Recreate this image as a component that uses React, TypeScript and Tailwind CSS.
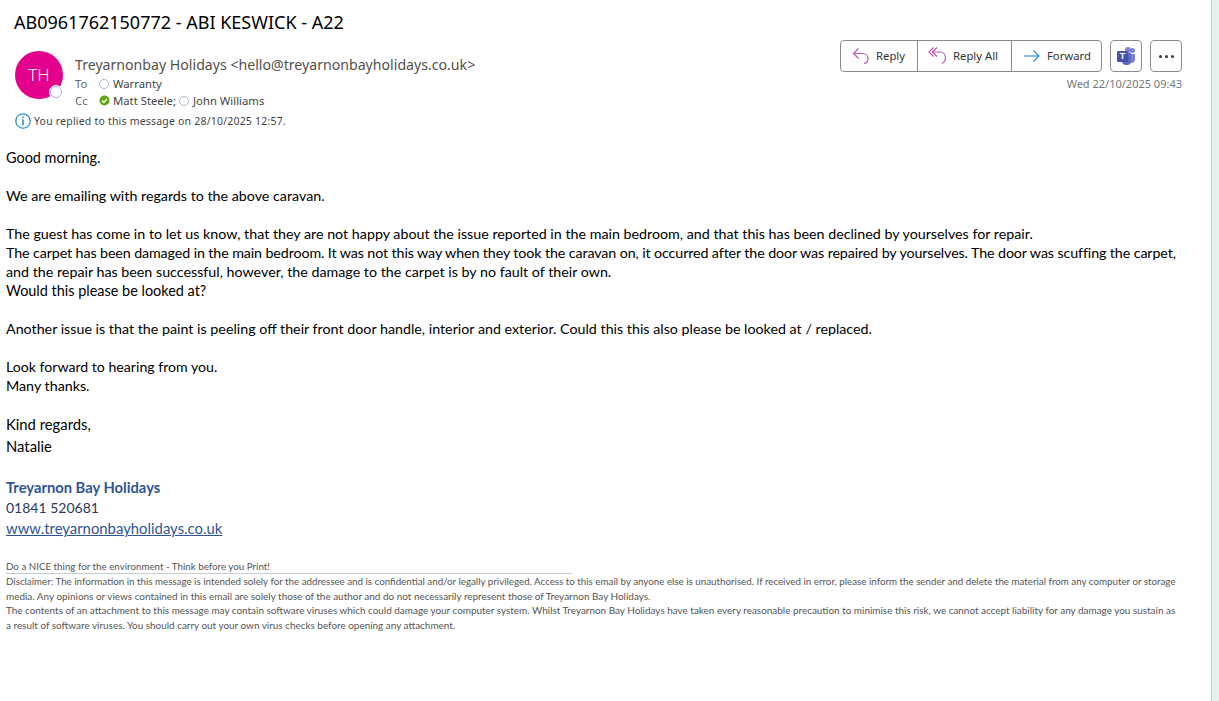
const segoe = "font-['Noto_Sans','Open_Sans',sans-serif]";

function Presence({ on }: { on?: boolean }) {
  if (on) {
    return (
      <svg width="11" height="11" viewBox="0 0 11 11" className="shrink-0">
        <circle cx="5.5" cy="5.5" r="5" fill="#5ea70f" />
        <path d="M3 5.6 L4.9 7.4 L8 3.9" fill="none" stroke="#fff" strokeWidth="1.4" />
      </svg>
    );
  }
  return <span className="block w-[10px] h-[10px] rounded-full border border-[#a9b8c6] bg-white shrink-0" />;
}

function ReplyIcon() {
  return (
    <svg width="20" height="20" viewBox="0 0 20 20" fill="none" stroke="#b556b5" strokeWidth="1.2">
      <path d="M7.5 2.5 L2.5 7.5 L7.5 12.5" />
      <path d="M2.5 7.5 H11.5 C15 7.5 17 10 17 12.5 C17 15 15.5 17 13 17.5" />
    </svg>
  );
}

function ReplyAllIcon() {
  return (
    <svg width="20" height="20" viewBox="0 0 20 20" fill="none" stroke="#b556b5" strokeWidth="1.2">
      <path d="M5.5 1.5 L1 6 L5.5 10.5" />
      <path d="M9 1.5 L4.5 6 L9 10.5" />
      <path d="M4.5 6 H11.5 C15 6 17.5 8.5 17.5 12 C17.5 14.5 16 16.5 14 17.5" />
    </svg>
  );
}

function ForwardIcon() {
  return (
    <svg width="18" height="16" viewBox="0 0 18 16" fill="none" stroke="#2f8fd0" strokeWidth="1.2">
      <path d="M1 8 H16" />
      <path d="M10.5 2.5 L16 8 L10.5 13.5" />
    </svg>
  );
}

function TeamsIcon() {
  return (
    <span className="relative w-[18px] h-[18px] block">
      <span className="absolute right-0 top-[1px] w-[5px] h-[5px] rounded-full bg-[#7b83d8]" />
      <span className="absolute left-[8px] top-0 w-[6px] h-[6px] rounded-full bg-[#7b83d8]" />
      <span className="absolute right-0 top-[7px] w-[8px] h-[9px] rounded-b-[4px] bg-[#7b83d8]" />
      <span className="absolute left-[5px] top-[6px] w-[9px] h-[12px] rounded-b-[4px] bg-[#5e66c4]" />
      <span className="absolute left-0 top-[4px] w-[11px] h-[11px] rounded-[1px] bg-[#4a50ad] text-white text-[9px] leading-[11px] text-center font-bold font-['Liberation_Sans',sans-serif]">
        T
      </span>
    </span>
  );
}

function InfoIcon() {
  return (
    <svg width="16" height="16" viewBox="0 0 16 16" fill="none" className="shrink-0">
      <circle cx="8" cy="8" r="7.2" stroke="#2f8fd0" strokeWidth="1.3" />
      <rect x="7.2" y="3.6" width="1.6" height="1.6" fill="#2f8fd0" />
      <rect x="7.2" y="6.4" width="1.6" height="6" fill="#2f8fd0" />
    </svg>
  );
}

export default function App() {
  return (
    <div className="flex w-[1219px] h-[701px] overflow-hidden bg-white">
      <main className="w-[1211px] shrink-0">
        {/* Header */}
        <div className={`${segoe} pl-[14px] pr-[29px]`}>
          <h1 className="pt-[10px] text-[18px] leading-[24px] font-normal text-black">
            AB0961762150772 - ABI KESWICK - A22
          </h1>
          <div className="flex justify-between mt-[6px]">
            <div className="flex">
              <div className="relative w-[48px] h-[48px] mt-[11px] ml-[1px] rounded-full bg-[#e3008c] text-white text-[17px] font-light leading-[48px] text-center shrink-0">
                TH
                <span className="absolute right-0 bottom-0 w-[14px] h-[14px] rounded-full bg-white border border-white">
                  <span className="block w-[12px] h-[12px] rounded-full border border-[#a9b8c6]" />
                </span>
              </div>
              <div className="ml-[12px] pt-[15px]">
                <div className="text-[14.14px] leading-[20px] text-[#55504a]">
                  Treyarnonbay Holidays &lt;hello@treyarnonbayholidays.co.uk&gt;
                </div>
                <div className="flex items-center text-[11.3px] leading-[17px] text-[#444]">
                  <span className="w-[24px] text-[#666]">To</span>
                  <Presence />
                  <span className="ml-[4px]">Warranty</span>
                </div>
                <div className="flex items-center text-[11.3px] leading-[17px] text-[#444]">
                  <span className="w-[24px] text-[#666]">Cc</span>
                  <Presence on />
                  <span className="ml-[3px]">Matt Steele;</span>
                  <span className="ml-[3px]"><Presence /></span>
                  <span className="ml-[4px]">John Williams</span>
                </div>
              </div>
            </div>
            <div className="flex flex-col items-end">
              <div className="flex items-center gap-[8px]">
                <div className="flex h-[32px] rounded-[4px] border border-[#8a8a8a] text-[11.3px] text-[#333]">
                  <button className="flex items-center w-[77px] pl-[10px] gap-[5px] border-r border-[#8a8a8a]">
                    <ReplyIcon />
                    Reply
                  </button>
                  <button className="flex items-center w-[94px] pl-[10px] gap-[5px] border-r border-[#8a8a8a]">
                    <ReplyAllIcon />
                    Reply All
                  </button>
                  <button className="flex items-center w-[89px] pl-[11px] gap-[6px]">
                    <ForwardIcon />
                    Forward
                  </button>
                </div>
                <button className="flex items-center justify-center w-[32px] h-[32px] rounded-[4px] border border-[#8a8a8a]">
                  <TeamsIcon />
                </button>
                <button className="flex items-center justify-center gap-[3px] w-[32px] h-[32px] rounded-[4px] border border-[#8a8a8a]">
                  <span className="w-[3px] h-[3px] rounded-full bg-[#333]" />
                  <span className="w-[3px] h-[3px] rounded-full bg-[#333]" />
                  <span className="w-[3px] h-[3px] rounded-full bg-[#333]" />
                </button>
              </div>
              <div className="mt-[4px] text-[11px] leading-[16px] text-[#777]">Wed 22/10/2025 09:43</div>
            </div>
          </div>
          <div className="flex items-center mt-[4px] ml-[1px] gap-[3px] text-[10.5px] leading-[16px] text-[#444] tracking-[0.2px]">
            <InfoIcon />
            You replied to this message on 28/10/2025 12:57.
          </div>
        </div>

        {/* Body */}
        <div className="pl-[6px] pt-[19px] text-[14.27px] leading-[19px] text-black font-['Lato',sans-serif]">
          <p className="text-[14.45px]">Good morning.</p>
          <p className="mt-[19px]">We are emailing with regards to the above caravan.</p>
          <p className="mt-[19px]">
            The guest has come in to let us know, that they are not happy about the issue reported in the main bedroom, and that this has been declined by yourselves for repair.
          </p>
          <p>
            <span className="tracking-[-0.11px]">
              The carpet has been damaged in the main bedroom. It was not this way when they took the caravan on, it occurred after the door was repaired by yourselves. The door was scuffing the carpet,
            </span>
            <br />
            and the repair has been successful, however, the damage to the carpet is by no fault of their own.
          </p>
          <p className="text-[14.45px]">Would this please be looked at?</p>
          <p className="mt-[19px]">
            Another issue is that the paint is peeling off their front door handle, interior and exterior. Could this this also please be looked at / replaced.
          </p>
          <p className="mt-[19px] text-[14.13px]">Look forward to hearing from you.</p>
          <p>Many thanks.</p>
          <p className="mt-[18px] text-[14.8px] leading-[22px]">Kind regards,</p>
          <p className="text-[14.8px] leading-[22px]">Natalie</p>

          {/* Signature */}
          <div className="mt-[20px] text-[#1f3864] leading-[20px]">
            <p className="text-[14.76px] font-bold text-[#2f5496]">Treyarnon Bay Holidays</p>
            <p className="mt-[1px] text-[14px]">01841 520681</p>
            <a className="text-[14.86px] text-[#2f5496] underline">www.treyarnonbayholidays.co.uk</a>
          </div>

          {/* Disclaimer */}
          <div className="mt-[20px] w-[1174px] text-[9.78px] leading-[14.4px] text-[#555]">
            <p className="w-[566px] border-b border-[#c3cbd3]">Do a NICE thing for the environment - Think before you Print!</p>
            <p>
              Disclaimer: The information in this message is intended solely for the addressee and is confidential and/or legally privileged. Access to this email by anyone else is unauthorised. If received in error, please inform the sender and delete the material from any computer or storage <span className="text-[9.95px]">media. Any opinions or views contained in this email are solely those of the author and do not necessarily represent those of Treyarnon Bay Holidays.</span>
            </p>
            <p className="text-[9.93px] whitespace-nowrap">
              The contents of an attachment to this message may contain software viruses which could damage your computer system. Whilst Treyarnon Bay Holidays have taken every reasonable precaution to minimise this risk, we cannot accept liability for any damage you sustain as
              <br />
              a result of software viruses. You should carry out your own virus checks before opening any attachment.
            </p>
          </div>
        </div>
      </main>
      <div className="flex-1 bg-[#e4f1ec] border-l border-[#cfcfcf]" />
    </div>
  );
}
